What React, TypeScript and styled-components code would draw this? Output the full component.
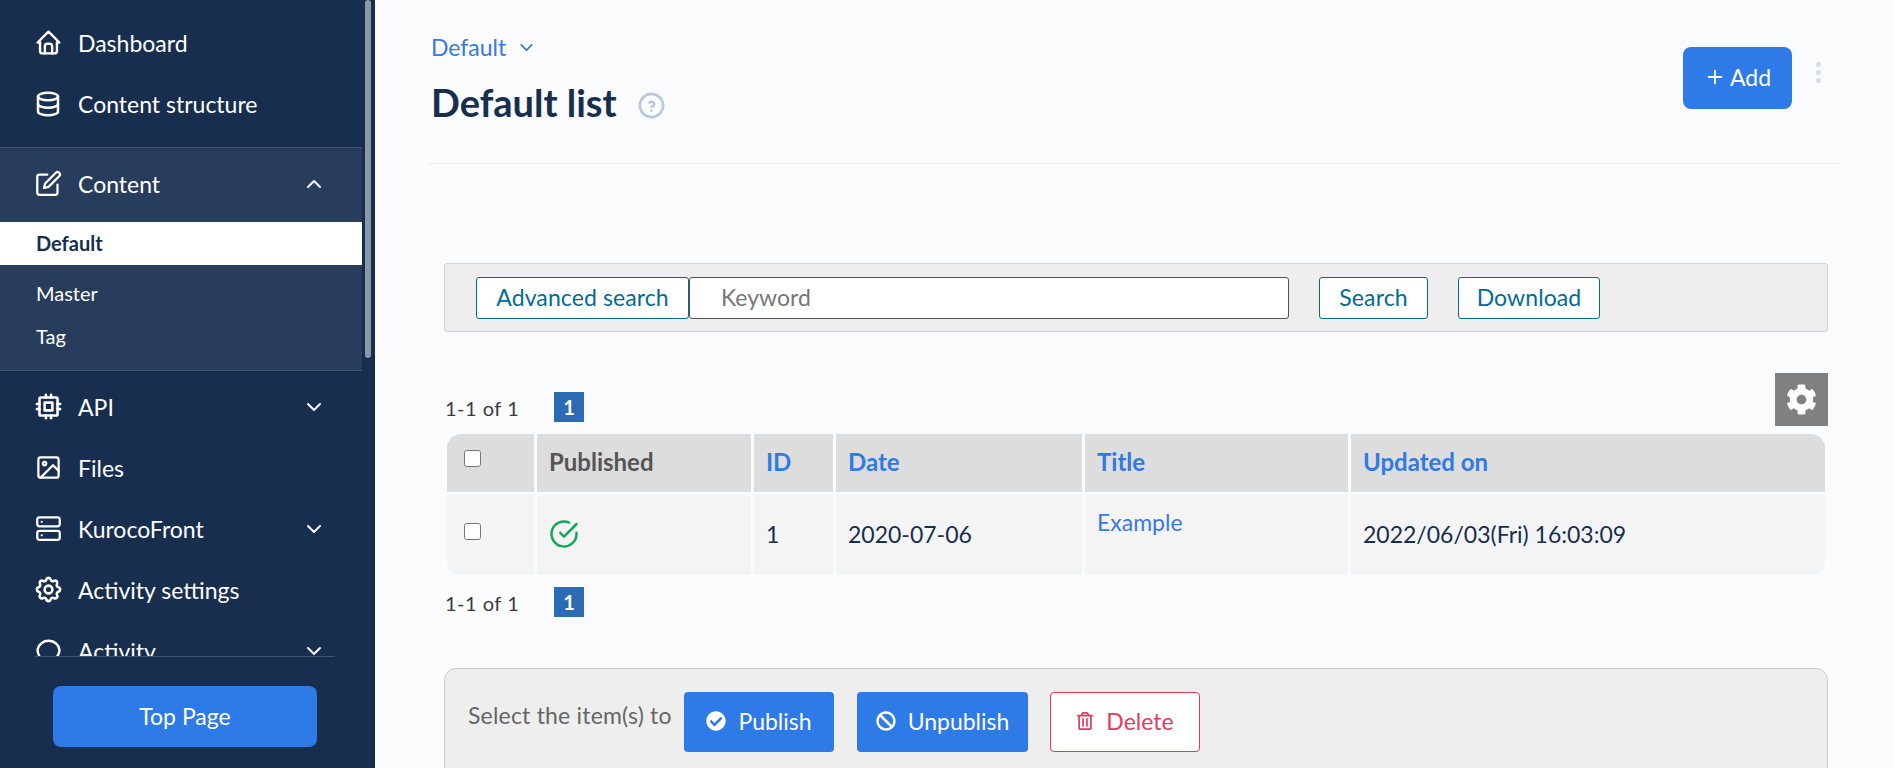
import styled, { createGlobalStyle } from 'styled-components'
import { TbHome, TbDatabase, TbCpu, TbSettings, TbChevronDown, TbChevronUp, TbHelpCircle, TbPlus, TbMessageCircle } from 'react-icons/tb'
import { FiCheckCircle, FiEdit, FiImage, FiServer } from 'react-icons/fi'
import { FaCheckCircle, FaBan, FaRegTrashAlt, FaCog } from 'react-icons/fa'

const colors = {
    navy: '#172e4f',
    navyLight: '#283d5b',
    blue: '#2e7ae6',
    teal: '#006c94',
    bg: '#fafbfd',
    red: '#e5395c',
}

const GlobalStyle = createGlobalStyle`
    html, body { margin: 0; padding: 0; height: 100%; overflow: hidden; }
    body {
        font-family: 'Lato', 'Noto Sans', sans-serif;
        background: ${colors.bg};
        color: ${colors.navy};
    }
    * { box-sizing: border-box; }
`

function NavRow(props: { icon: React.ReactNode; label: string; arrow?: 'up' | 'down' }) {
    return (
        <Row>
            <RowIcon>{props.icon}</RowIcon>
            <RowLabel>{props.label}</RowLabel>
            {props.arrow === 'up' && <Arrow><TbChevronUp size={24} /></Arrow>}
            {props.arrow === 'down' && <Arrow><TbChevronDown size={24} /></Arrow>}
        </Row>
    )
}

function Pager(props: { className?: string }) {
    return (
        <PagerWrap className={props.className}>
            <PagerText>1-1 of 1</PagerText>
            <PageBox>1</PageBox>
        </PagerWrap>
    )
}

export default function App() {
    return (
        <Page>
            <GlobalStyle />
            <Sidebar>
                <Nav>
                    <NavInner>
                        <NavRow icon={<TbHome size={29} />} label='Dashboard' />
                        <NavRow icon={<TbDatabase size={30} />} label='Content structure' />
                        <Section>
                            <NavRow icon={<FiEdit size={27} />} label='Content' arrow='up' />
                            <SubActive>Default</SubActive>
                            <SubItem>Master</SubItem>
                            <SubItem>Tag</SubItem>
                        </Section>
                        <NavRow icon={<TbCpu size={31} />} label='API' arrow='down' />
                        <NavRow icon={<FiImage size={27} />} label='Files' />
                        <NavRow icon={<FiServer size={27} />} label='KurocoFront' arrow='down' />
                        <NavRow icon={<TbSettings size={31} />} label='Activity settings' />
                        <NavRow icon={<TbMessageCircle size={29} />} label='Activity' arrow='down' />
                    </NavInner>
                    <ScrollThumb />
                </Nav>
                <Footer>
                    <TopPage>Top Page</TopPage>
                </Footer>
            </Sidebar>
            <Main>
                <Header>
                    <div>
                        <Crumb>
                            Default <TbChevronDown size={21} />
                        </Crumb>
                        <TitleRow>
                            <Title>Default list</Title>
                            <HelpIcon><TbHelpCircle size={31} /></HelpIcon>
                        </TitleRow>
                    </div>
                    <HeaderActions>
                        <AddButton><TbPlus size={22} /> Add</AddButton>
                        <Dots><i /><i /><i /></Dots>
                    </HeaderActions>
                </Header>
                <Content>
                    <SearchBar>
                        <AdvancedButton>Advanced search</AdvancedButton>
                        <Keyword placeholder='Keyword' />
                        <SearchButton>Search</SearchButton>
                        <DownloadButton>Download</DownloadButton>
                    </SearchBar>
                    <ListTop>
                        <Pager />
                        <GearBox><FaCog size={31} /></GearBox>
                    </ListTop>
                    <Table>
                        <colgroup>
                            <col width={87} />
                            <col width={214} />
                            <col width={79} />
                            <col width={246} />
                            <col width={263} />
                            <col width={474} />
                        </colgroup>
                        <thead>
                            <tr>
                                <Th><Check type='checkbox' /></Th>
                                <Th>Published</Th>
                                <Th $link>ID</Th>
                                <Th $link>Date</Th>
                                <Th $link>Title</Th>
                                <Th $link>Updated on</Th>
                            </tr>
                        </thead>
                        <tbody>
                            <tr>
                                <Td><Check type='checkbox' /></Td>
                                <Td><PublishedIcon><FiCheckCircle size={30} /></PublishedIcon></Td>
                                <Td>1</Td>
                                <Td>2020-07-06</Td>
                                <TitleCell>Example</TitleCell>
                                <Td>2022/06/03(Fri) 16:03:09</Td>
                            </tr>
                        </tbody>
                    </Table>
                    <BottomPager />
                    <ActionPanel>
                        <ActionLabel>Select the item(s) to</ActionLabel>
                        <PublishButton><FaCheckCircle size={20} /> Publish</PublishButton>
                        <UnpublishButton><FaBan size={20} /> Unpublish</UnpublishButton>
                        <DeleteButton><FaRegTrashAlt size={18} /> Delete</DeleteButton>
                    </ActionPanel>
                </Content>
            </Main>
        </Page>
    )
}

const Page = styled('div')`
    display: flex;
    width: 1894px;
    height: 768px;
    overflow: hidden;
`

const Sidebar = styled('aside')`
    width: 375px;
    flex: none;
    background: ${colors.navy};
    display: flex;
    flex-direction: column;
`

const Nav = styled('nav')`
    position: relative;
    height: 656px;
    overflow: hidden;
    flex: none;
`

const NavInner = styled('div')`
    width: 362px;
    padding-top: 13px;
`

const ScrollThumb = styled('div')`
    position: absolute;
    left: 365px;
    top: 0;
    width: 6px;
    height: 358px;
    border-radius: 3px;
    background: #8b98a9;
`

const Row = styled('div')`
    display: flex;
    align-items: center;
    height: 61px;
    padding: 0 0 2px 32px;
    color: #fff;
    font-size: 23px;
`

const RowIcon = styled('span')`
    display: flex;
    justify-content: center;
    width: 32px;
    margin-right: 14px;
`

const RowLabel = styled('span')`
    flex: 1;
`

const Arrow = styled('span')`
    display: flex;
    margin-right: 36px;
`

const Section = styled('div')`
    background: ${colors.navyLight};
    border-top: 1px solid #3f5371;
    border-bottom: 1px solid #3f5371;
    margin: 12px 0 6px;
    padding: 6px 0 12px;
`

const SubItem = styled('div')`
    height: 43px;
    line-height: 43px;
    padding-left: 36px;
    font-size: 20px;
    color: #fff;
`

const SubActive = styled(SubItem)`
    margin: 7px 0;
    line-height: 42px;
    background: #fff;
    color: ${colors.navy};
    font-weight: 700;
`

const Footer = styled('div')`
    margin: 0 40px 0 35px;
    border-top: 1px solid #3f5371;
    padding: 29px 0 0 18px;
`

const TopPage = styled('button')`
    width: 264px;
    height: 61px;
    padding: 0 0 2px;
    border: none;
    border-radius: 8px;
    background: ${colors.blue};
    color: #fff;
    font: inherit;
    font-size: 23px;
`

const Main = styled('main')`
    flex: 1;
    min-width: 0;
    padding: 0 53px 0 54px;
`

const Header = styled('header')`
    display: flex;
    justify-content: space-between;
    height: 164px;
    padding: 34px 0 0 2px;
    border-bottom: 1px solid #e8ebf1;
`

const Crumb = styled('div')`
    display: flex;
    align-items: center;
    gap: 10px;
    height: 26px;
    color: #3a78e8;
    font-size: 23px;
`

const TitleRow = styled('div')`
    display: flex;
    align-items: center;
    margin-top: 19px;
`

const Title = styled('h1')`
    margin: 0;
    font-size: 38px;
    font-weight: 700;
    line-height: 46px;
    color: ${colors.navy};
`

const HelpIcon = styled('span')`
    display: flex;
    margin: 7px 0 0 19px;
    color: #b8c8e0;
`

const HeaderActions = styled('div')`
    display: flex;
    align-items: flex-start;
    padding-top: 13px;
`

const AddButton = styled('button')`
    display: flex;
    align-items: center;
    justify-content: center;
    gap: 4px;
    width: 109px;
    height: 62px;
    padding: 0 0 2px;
    border: none;
    border-radius: 8px;
    background: ${colors.blue};
    color: #fff;
    font: inherit;
    font-size: 23px;
`

const Dots = styled('div')`
    display: flex;
    flex-direction: column;
    gap: 3px;
    margin: 15px 20px 0 24px;

    i {
        display: block;
        width: 5px;
        height: 5px;
        border-radius: 50%;
        background: #d5dde9;
    }
`

const Content = styled('div')`
    padding: 99px 13px 0 15px;
`

const SearchBar = styled('div')`
    display: flex;
    align-items: center;
    height: 69px;
    padding-left: 31px;
    background: #eee;
    border: 1px solid #d2d2d2;
    border-radius: 3px;
`

const OutlineButton = styled('button')`
    height: 42px;
    padding: 0 0 2px;
    background: #fff;
    border: 1px solid ${colors.teal};
    border-radius: 3px;
    color: ${colors.teal};
    font: inherit;
    font-size: 23px;
    letter-spacing: 0.1px;
`

const AdvancedButton = styled(OutlineButton)`
    width: 213px;
`

const SearchButton = styled(OutlineButton)`
    width: 109px;
    margin-left: 30px;
`

const DownloadButton = styled(OutlineButton)`
    width: 142px;
    margin-left: 30px;
`

const Keyword = styled('input')`
    width: 600px;
    height: 42px;
    padding: 0 31px 2px;
    background: #fff;
    border: 1px solid #555;
    border-radius: 3px;
    font: inherit;
    font-size: 23px;

    &::placeholder {
        color: #777;
        opacity: 1;
    }
`

const ListTop = styled('div')`
    display: flex;
    justify-content: space-between;
    align-items: flex-end;
    margin-top: 41px;
`

const PagerWrap = styled('div')`
    display: flex;
    align-items: center;
    padding-left: 1px;
    margin-bottom: 4px;
`

const PagerText = styled('span')`
    width: 109px;
    padding-top: 1px;
    font-size: 20px;
    letter-spacing: 0.5px;
    color: #3d3d3d;
`

const PageBox = styled('span')`
    width: 30px;
    height: 30px;
    line-height: 30px;
    text-align: center;
    background: #2b6cb4;
    color: #fff;
    font-size: 20px;
    font-weight: 700;
`

const BottomPager = styled(Pager)`
    margin: 9px 0 0;
`

const GearBox = styled('div')`
    display: flex;
    align-items: center;
    justify-content: center;
    width: 53px;
    height: 53px;
    background: #808080;
    color: #fff;
`

const Table = styled('table')`
    width: 1384px;
    margin-top: 5px;
    table-layout: fixed;
    border-collapse: separate;
    border-spacing: 3px;
    font-size: 23px;
`

const Th = styled('th')<{ $link?: boolean }>`
    height: 58px;
    padding: 0 0 3px 12px;
    text-align: left;
    font-size: 24px;
    font-weight: 700;
    background: #ddd;
    color: ${({ $link }) => ($link ? colors.blue : '#555')};

    &:first-child {
        padding-left: 17px;
        border-top-left-radius: 14px;
    }
    &:last-child {
        border-top-right-radius: 14px;
    }
`

const Td = styled('td')`
    height: 80px;
    padding: 0 0 2px 12px;
    background: #f4f4f4;
    color: ${colors.navy};

    &:first-child {
        padding-left: 17px;
        border-bottom-left-radius: 14px;
    }
    &:last-child {
        border-bottom-right-radius: 14px;
    }
`

const TitleCell = styled(Td)`
    vertical-align: top;
    padding: 13px 0 0 12px;
    color: #3a78e8;
`

const Check = styled('input')`
    display: block;
    width: 17px;
    height: 17px;
    margin: -6px 0 0;
`

const PublishedIcon = styled('span')`
    display: flex;
    color: #12a85c;
`

const ActionPanel = styled('div')`
    display: flex;
    align-items: flex-start;
    height: 200px;
    margin-top: 51px;
    padding: 23px 0 0 23px;
    background: #eee;
    border: 1px solid #ccc;
    border-radius: 12px 12px 0 0;
`

const ActionLabel = styled('span')`
    width: 216px;
    line-height: 46px;
    font-size: 23px;
    letter-spacing: 0.2px;
    color: #666;
    white-space: nowrap;
`

const ActionButton = styled('button')`
    display: flex;
    align-items: center;
    justify-content: center;
    gap: 12px;
    height: 60px;
    padding: 0 0 2px;
    border-radius: 4px;
    font: inherit;
    font-size: 23px;
`

const PublishButton = styled(ActionButton)`
    width: 150px;
    border: none;
    background: ${colors.blue};
    color: #fff;
`

const UnpublishButton = styled(ActionButton)`
    width: 171px;
    margin-left: 23px;
    border: none;
    background: ${colors.blue};
    color: #fff;
`

const DeleteButton = styled(ActionButton)`
    width: 150px;
    margin-left: 22px;
    background: #fff;
    border: 1px solid ${colors.red};
    color: ${colors.red};
`
